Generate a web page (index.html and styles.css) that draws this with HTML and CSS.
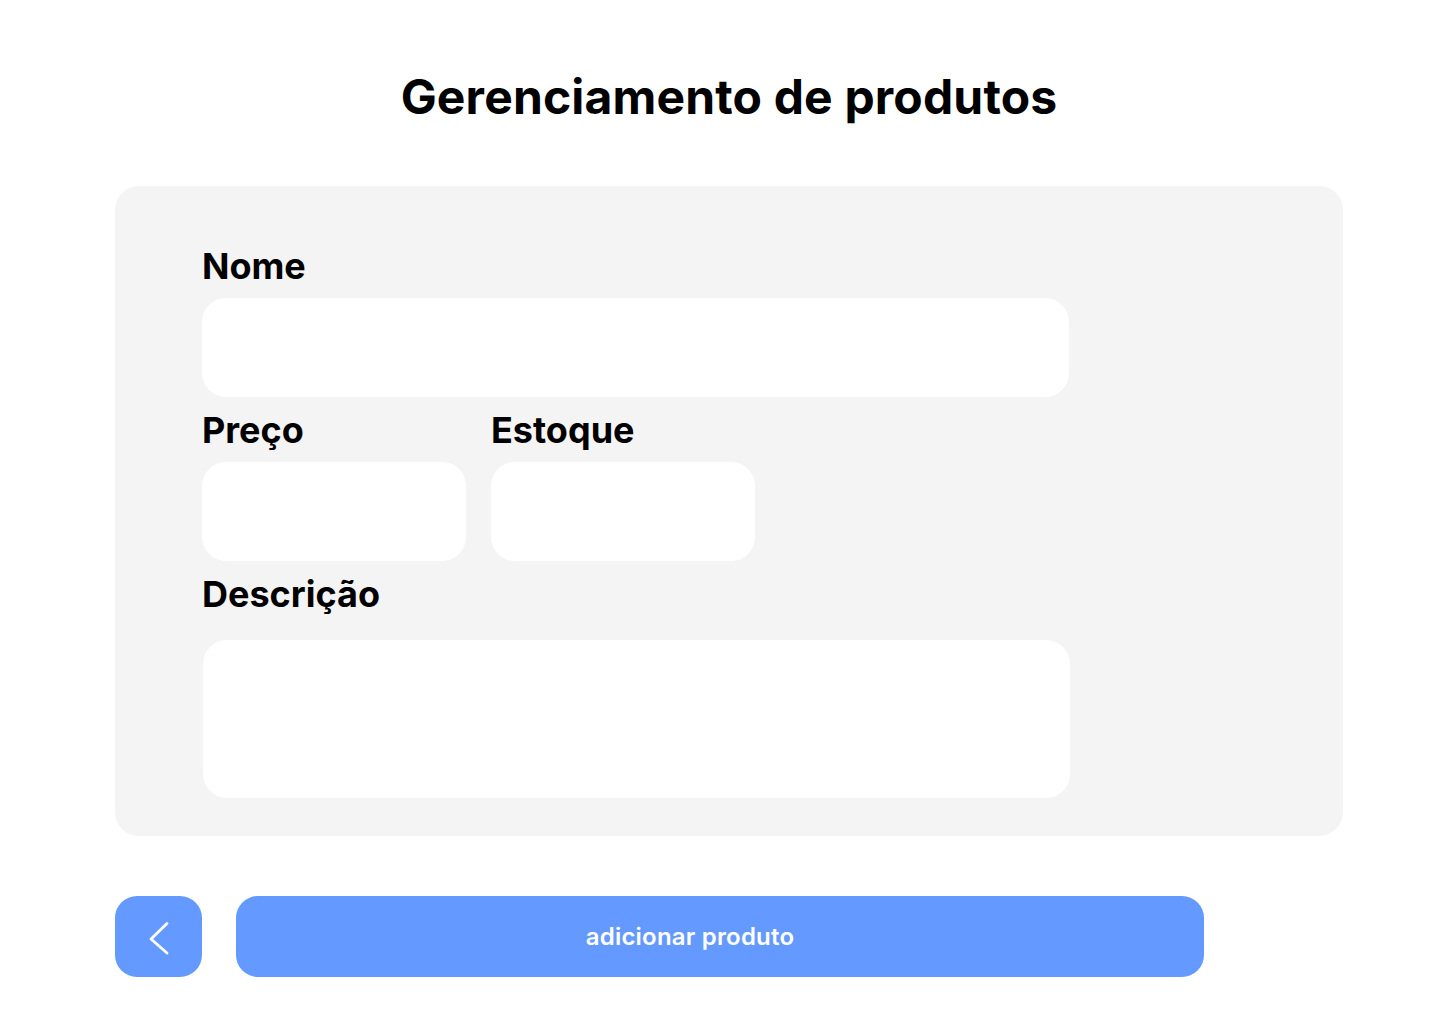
FILE: index.html
```html
<!DOCTYPE html>
<html lang="pt-BR">
<head>
<meta charset="utf-8">
<title>Gerenciamento de produtos</title>
<link rel="stylesheet" href="styles.css">
</head>
<body>
<main class="page">
  <h1 class="title">Gerenciamento de produtos</h1>
  <form class="card">
    <div class="field">
      <label class="label" for="nome">Nome</label>
      <input class="input input-wide" id="nome" type="text">
    </div>
    <div class="row">
      <div class="field">
        <label class="label" for="preco">Preço</label>
        <input class="input input-small" id="preco" type="text">
      </div>
      <div class="field">
        <label class="label" for="estoque">Estoque</label>
        <input class="input input-small" id="estoque" type="text">
      </div>
    </div>
    <div class="field">
      <label class="label label-desc" for="descricao">Descrição</label>
      <textarea class="input textarea" id="descricao"></textarea>
    </div>
  </form>
  <div class="actions">
    <button class="btn btn-back" type="button" aria-label="Voltar">
      <svg width="87" height="81" viewBox="0 0 87 81" fill="none">
        <path d="M52 27.5 L36 43 L52 57" stroke="#ffffff" stroke-width="2.8" stroke-linecap="round" stroke-linejoin="round"/>
      </svg>
    </button>
    <button class="btn btn-primary" type="button">adicionar produto</button>
  </div>
</main>
</body>
</html>
```

FILE: styles.css
```css
* { box-sizing: border-box; }

html, body {
  margin: 0;
  padding: 0;
  background: #ffffff;
}

body {
  font-family: Inter, "Noto Sans", "Liberation Sans", sans-serif;
  color: #000000;
}

.page {
  width: 1228px;
  margin-left: 115px;
  padding-top: 68px;
}

.title {
  margin: 0;
  height: 58px;
  font-size: 48px;
  line-height: 58px;
  font-weight: 700;
  letter-spacing: 0.16px;
  text-align: center;
}

.card {
  margin-top: 60px;
  height: 650px;
  background: #f4f4f4;
  border-radius: 24px;
  padding: 57px 0 39px 87px;
  display: flex;
  flex-direction: column;
  gap: 10px;
}

.field {
  display: flex;
  flex-direction: column;
}

.row {
  display: flex;
  gap: 25px;
}

.label {
  display: block;
  font-size: 36px;
  line-height: 44px;
  font-weight: 700;
  height: 44px;
  margin-top: 1px;
  margin-bottom: 10px;
}

.label-desc {
  margin-bottom: 24px;
}

.input {
  display: block;
  border: none;
  outline: none;
  background: #ffffff;
  border-radius: 24px;
  height: 99px;
  font: inherit;
  padding: 0 24px;
  margin: 0;
}

.input-wide { width: 867px; }
.input-small { width: 264px; }

.textarea {
  width: 867px;
  height: 158px;
  margin-left: 1px;
  resize: none;
}

.actions {
  margin-top: 60px;
  display: flex;
  gap: 34px;
}

.btn {
  border: none;
  background: #649aff;
  color: #ffffff;
  height: 81px;
  border-radius: 22px;
  padding: 0;
  margin: 0;
  font-family: inherit;
  cursor: pointer;
}

.btn-back {
  width: 87px;
  display: flex;
  align-items: center;
  justify-content: center;
}

.btn-back svg { display: block; }

.btn-primary {
  width: 968px;
  font-size: 24px;
  font-weight: 600;
  letter-spacing: 0.2px;
  padding-right: 60px;
}
```
